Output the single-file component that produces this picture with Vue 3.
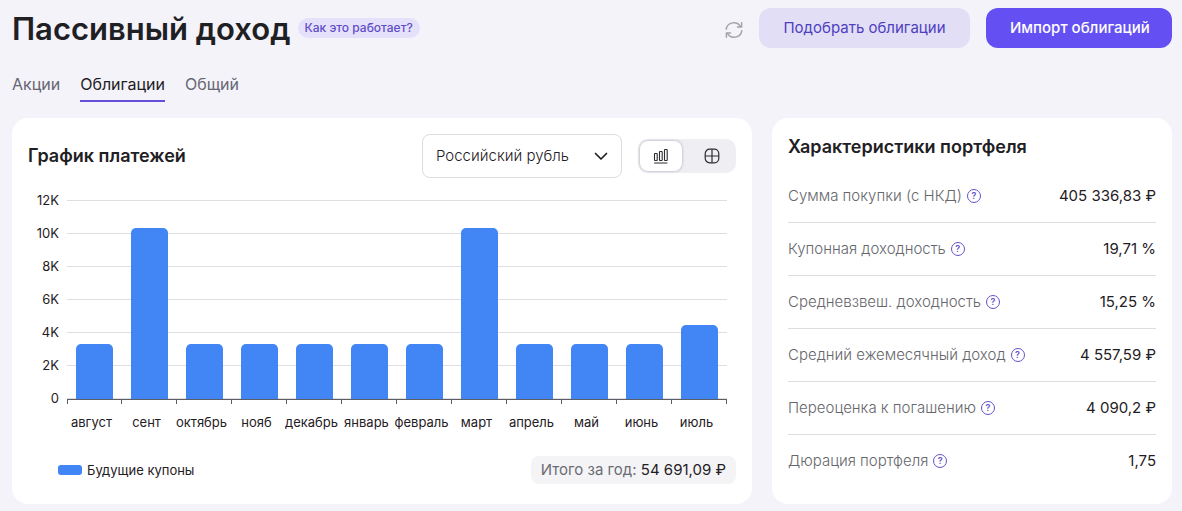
<script setup>
import { ref } from 'vue'

const tabs = ['Акции', 'Облигации', 'Общий']
const activeTab = ref('Облигации')
const currency = ref('rub')
const view = ref('chart')

const maxValue = 12000
const ticks = ['12K', '10K', '8K', '6K', '4K', '2K', '0']
const payments = [
  { month: 'август', value: 3290 },
  { month: 'сент', value: 10320 },
  { month: 'октябрь', value: 3290 },
  { month: 'нояб', value: 3290 },
  { month: 'декабрь', value: 3290 },
  { month: 'январь', value: 3290 },
  { month: 'февраль', value: 3290 },
  { month: 'март', value: 10320 },
  { month: 'апрель', value: 3290 },
  { month: 'май', value: 3290 },
  { month: 'июнь', value: 3290 },
  { month: 'июль', value: 4440 },
]

const stats = [
  { label: 'Сумма покупки (с НКД)', value: '405 336,83 ₽' },
  { label: 'Купонная доходность', value: '19,71 %' },
  { label: 'Средневзвеш. доходность', value: '15,25 %' },
  { label: 'Средний ежемесячный доход', value: '4 557,59 ₽' },
  { label: 'Переоценка к погашению', value: '4 090,2 ₽' },
  { label: 'Дюрация портфеля', value: '1,75' },
]
</script>

<template>
  <main class="page">
    <header class="header">
      <h1 class="title">Пассивный доход</h1>
      <a class="how" href="#">Как это работает?</a>
      <div class="actions">
        <button class="refresh" type="button" aria-label="Обновить">
          <svg width="18" height="18" viewBox="0 0 18 18" fill="none" stroke="currentColor" stroke-width="1.5" stroke-linecap="round" stroke-linejoin="round">
            <path d="M1.2 8.2A7.8 7.8 0 0 1 15.6 5.6" />
            <path d="M16.6 1.8v4.1h-4.1" />
            <path d="M16.8 9.8A7.8 7.8 0 0 1 2.4 12.4" />
            <path d="M1.4 16.2v-4.1h4.1" />
          </svg>
        </button>
        <button class="btn btn-soft" type="button">Подобрать облигации</button>
        <button class="btn btn-main" type="button">Импорт облигаций</button>
      </div>
    </header>

    <nav class="tabs">
      <a
        v-for="tab in tabs"
        :key="tab"
        href="#"
        class="tab"
        :class="{ active: tab === activeTab }"
        @click.prevent="activeTab = tab"
      >{{ tab }}</a>
    </nav>

    <div class="cards">
      <section class="card chart-card">
        <div class="card-head">
          <h2 class="card-title">График платежей</h2>
          <div class="select-wrap">
            <select v-model="currency" class="select" aria-label="Валюта">
              <option value="rub">Российский рубль</option>
            </select>
            <svg class="chevron" width="14" height="9" viewBox="0 0 14 9" fill="none" stroke="currentColor" stroke-width="1.7" stroke-linecap="round" stroke-linejoin="round">
              <path d="M1.5 1.5L7 7l5.500-5.500" />
            </svg>
          </div>
          <div class="toggle">
            <button type="button" class="toggle-btn" :class="{ on: view === 'chart' }" aria-label="График" @click="view = 'chart'">
              <svg width="16" height="16" viewBox="0 0 16 16" fill="none" stroke="currentColor" stroke-width="1.1" stroke-linejoin="round" stroke-linecap="round">
                <rect x="1.500" y="5.500" width="2.700" height="7" rx="0.500" />
                <rect x="6.500" y="3.500" width="2.700" height="9" rx="0.500" />
                <rect x="11.500" y="1.500" width="2.700" height="11" rx="0.500" />
                <path d="M1.500 15h12.500" />
              </svg>
            </button>
            <button type="button" class="toggle-btn" :class="{ on: view === 'table' }" aria-label="Таблица" @click="view = 'table'">
              <svg width="16" height="16" viewBox="0 0 16 16" fill="none" stroke="currentColor" stroke-width="1.2">
                <rect x="1.200" y="1.200" width="13.600" height="13.600" rx="4.500" />
                <path d="M8 1.200v13.600M1.200 8h13.600" />
              </svg>
            </button>
          </div>
        </div>

        <div class="chart">
          <div class="y-axis">
            <span v-for="t in ticks" :key="t">{{ t }}</span>
          </div>
          <div class="plot">
            <div v-for="p in payments" :key="p.month" class="slot">
              <div class="bar" :style="{ height: (p.value / maxValue) * 100 + '%' }"></div>
            </div>
          </div>
          <div class="x-axis">
            <span v-for="p in payments" :key="p.month" class="month">{{ p.month }}</span>
          </div>
        </div>

        <div class="card-foot">
          <span class="legend"><i class="swatch"></i>Будущие купоны</span>
          <span class="total">Итого за год: <b>54 691,09 ₽</b></span>
        </div>
      </section>

      <section class="card stats-card">
        <h2 class="card-title">Характеристики портфеля</h2>
        <dl class="stats">
          <div v-for="s in stats" :key="s.label" class="stat">
            <dt>
              {{ s.label }}
              <button class="help" type="button" :aria-label="'Подсказка: ' + s.label">?</button>
            </dt>
            <dd>{{ s.value }}</dd>
          </div>
        </dl>
      </section>
    </div>
  </main>
</template>

<style>
body {
  background: #f4f3f9;
}
</style>

<style scoped>
.page {
  font-family: Inter, "Noto Sans", sans-serif;
  color: #1f2024;
  padding: 8px 10px 8px 12px;
  font-size: 15px;
  line-height: 20px;
}
.page * {
  box-sizing: border-box;
}
button,
select {
  font: inherit;
  color: inherit;
  border: 0;
  padding: 0;
  margin: 0;
  cursor: pointer;
}
h1,
h2,
dl,
dd {
  margin: 0;
}
a {
  text-decoration: none;
}
.header {
  display: flex;
  align-items: center;
  height: 40px;
}
.title {
  font-size: 31px;
  line-height: 40px;
  padding-top: 2px;
  font-weight: 600;
  white-space: nowrap;
}
.how {
  margin-left: 7px;
  padding: 0 7px;
  border-radius: 10px;
  background: #e5e1fb;
  color: #5f4dc8;
  font-size: 12px;
  font-weight: 500;
  white-space: nowrap;
}
.actions {
  margin-left: auto;
  display: flex;
  align-items: center;
  gap: 16px;
}
.refresh {
  background: none;
  color: #a3a3a9;
  display: flex;
  padding-top: 4px;
}
.btn {
  height: 40px;
  padding: 0 24px;
  border-radius: 12px;
  white-space: nowrap;
}
.btn-soft {
  width: 211px;
  background: #e1def6;
  color: #4f3fc0;
}
.btn-main {
  width: 186px;
  background: #6450f2;
  color: #fff;
  font-weight: 500;
}
.tabs {
  display: flex;
  gap: 20px;
  margin-top: 26px;
  font-size: 16px;
}
.tab {
  padding-bottom: 6px;
  border-bottom: 2px solid transparent;
  color: #666573;
}
.tab.active {
  color: #1f2024;
  border-color: #6450d8;
}
.cards {
  display: grid;
  grid-template-columns: minmax(0, 1fr) 400px;
  gap: 20px;
  margin-top: 16px;
}
.card {
  background: #fff;
  border-radius: 16px;
  padding: 16px;
}
.card-title {
  font-size: 18px;
  line-height: 26px;
  font-weight: 600;
}
.card-head {
  display: flex;
  align-items: center;
}
.select-wrap {
  position: relative;
  width: 200px;
  margin-left: auto;
}
.select {
  appearance: none;
  display: block;
  width: 100%;
  height: 44px;
  padding: 0 40px 0 13px;
  border: 1px solid #dcdce1;
  border-radius: 8px;
  background: #fff;
  font-weight: 300;
}
.chevron {
  position: absolute;
  right: 14px;
  top: 18px;
  pointer-events: none;
}
.toggle {
  display: flex;
  gap: 8px;
  margin-left: 16px;
  padding: 2px;
  border-radius: 10px;
  background: #efeef3;
}
.toggle-btn {
  display: flex;
  align-items: center;
  justify-content: center;
  width: 44px;
  height: 30px;
  border-radius: 8px;
  background: none;
  color: #2b2c30;
}
.toggle-btn:first-child {
  width: 42px;
}
.toggle-btn.on {
  background: #fff;
  box-shadow: 0 0 3px rgba(40, 40, 60, 0.35);
}
.chart {
  display: grid;
  grid-template-columns: 31px minmax(0, 1fr);
  column-gap: 8px;
  padding: 12px 9px 0 0;
  font-size: 13px;
}
.y-axis {
  display: flex;
  flex-direction: column;
  justify-content: space-between;
  height: 218px;
  text-align: right;
}
.plot {
  display: grid;
  grid-template-columns: repeat(12, minmax(0, 1fr));
  height: 200px;
  margin-top: 10px;
  border-bottom: 1px solid #5c5d63;
  background: repeating-linear-gradient(to bottom, #dfdfe3 0 1px, transparent 1px 33px);
}
.slot {
  position: relative;
  display: flex;
  align-items: flex-end;
  justify-content: center;
}
.slot::after,
.slot:first-child::before {
  content: "";
  position: absolute;
  top: 100%;
  right: 0;
  width: 1px;
  height: 5px;
  background: #5c5d63;
}
.slot:first-child::before {
  right: auto;
  left: 0;
}
.bar {
  width: 69%;
  border-radius: 5px 5px 0 0;
  background: #4285f4;
}
.x-axis {
  grid-column: 2;
  display: grid;
  grid-template-columns: repeat(12, minmax(0, 1fr));
  margin: 4px 3px 0 -3px;
}
.month {
  display: flex;
  justify-content: center;
  white-space: nowrap;
}
.card-foot {
  display: flex;
  align-items: center;
  justify-content: space-between;
  margin-top: 24px;
}
.legend {
  display: flex;
  align-items: center;
  gap: 5px;
  margin-left: 30px;
  font-size: 13px;
}
.swatch {
  width: 24px;
  height: 10px;
  border-radius: 3px;
  background: #4285f4;
}
.total {
  padding: 4px 10px;
  border-radius: 8px;
  background: #f4f4f7;
  color: #6b6c72;
  white-space: nowrap;
}
.total b {
  font-weight: 400;
  color: #1f2024;
}
.stats {
  margin-top: 10px;
}
.stat {
  display: flex;
  align-items: center;
  justify-content: space-between;
  height: 53px;
  border-bottom: 1px solid #dddde1;
}
.stat:last-child {
  border-color: transparent;
}
.stat dt {
  display: flex;
  align-items: center;
  gap: 5px;
  color: #66676c;
  font-weight: 300;
}
.help {
  display: flex;
  align-items: center;
  justify-content: center;
  width: 14px;
  height: 14px;
  border: 1px solid #6552c8;
  border-radius: 50%;
  background: none;
  color: #6552c8;
  font-size: 9px;
  line-height: 12px;
  font-weight: 600;
}
</style>
